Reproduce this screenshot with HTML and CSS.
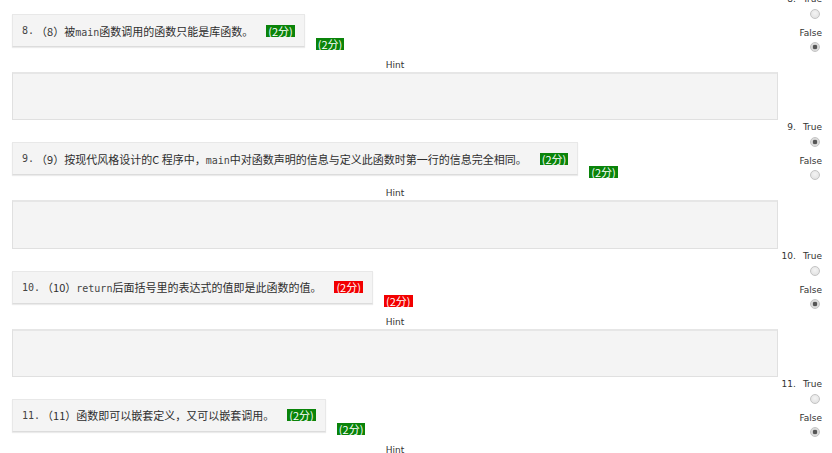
FILE: index.html
```html
<!DOCTYPE html>
<html lang="zh-CN">
<head>
<meta charset="utf-8">
<title>判断题</title>
<link rel="stylesheet" href="styles.css">
</head>
<body>
<div class="list">
  <section class="q">
    <div class="main">
      <div class="row">
        <div class="stem"><span class="num">8.</span><span class="txt">（8）被<code>main</code>函数调用的函数只能是库函数。</span><span class="badge ok">(2分)</span></div>
        <span class="badge ok out">(2分)</span>
      </div>
      <div class="hint-label">Hint</div>
      <div class="hint-box"></div>
    </div>
    <div class="answer">
      <div class="opt"><span class="anum">8.</span>True</div>
      <span class="radio"></span>
      <div class="opt">False</div>
      <span class="radio checked"></span>
    </div>
  </section>

  <section class="q">
    <div class="main">
      <div class="row">
        <div class="stem"><span class="num">9.</span><span class="txt">（9）按现代风格设计的C 程序中，<code>main</code>中对函数声明的信息与定义此函数时第一行的信息完全相同。</span><span class="badge ok">(2分)</span></div>
        <span class="badge ok out">(2分)</span>
      </div>
      <div class="hint-label">Hint</div>
      <div class="hint-box"></div>
    </div>
    <div class="answer">
      <div class="opt"><span class="anum">9.</span>True</div>
      <span class="radio checked"></span>
      <div class="opt">False</div>
      <span class="radio"></span>
    </div>
  </section>

  <section class="q">
    <div class="main">
      <div class="row">
        <div class="stem"><span class="num">10.</span><span class="txt">（10）<code>return</code>后面括号里的表达式的值即是此函数的值。</span><span class="badge bad">(2分)</span></div>
        <span class="badge bad out">(2分)</span>
      </div>
      <div class="hint-label">Hint</div>
      <div class="hint-box"></div>
    </div>
    <div class="answer">
      <div class="opt"><span class="anum">10.</span>True</div>
      <span class="radio"></span>
      <div class="opt">False</div>
      <span class="radio checked"></span>
    </div>
  </section>

  <section class="q">
    <div class="main">
      <div class="row">
        <div class="stem"><span class="num">11.</span><span class="txt">（11）函数即可以嵌套定义，又可以嵌套调用。</span><span class="badge ok">(2分)</span></div>
        <span class="badge ok out">(2分)</span>
      </div>
      <div class="hint-label">Hint</div>
      <div class="hint-box"></div>
    </div>
    <div class="answer">
      <div class="opt"><span class="anum">11.</span>True</div>
      <span class="radio"></span>
      <div class="opt">False</div>
      <span class="radio checked"></span>
    </div>
  </section>
</div>
</body>
</html>
```

FILE: styles.css
```css
html, body {
  margin: 0;
  padding: 0;
  background: #fff;
  overflow: hidden;
}

body {
  font-family: "DejaVu Sans", Verdana, sans-serif;
  color: #333;
}

.list {
  margin-top: -8px;
}

.q {
  display: grid;
  grid-template-columns: 766px 1fr;
  padding-left: 12px;
}

.main {
  display: flex;
  flex-direction: column;
  align-items: flex-start;
  padding-top: 22px;
}

.row {
  display: flex;
  align-items: flex-end;
}

.stem {
  display: flex;
  align-items: center;
  box-sizing: border-box;
  height: 33px;
  padding: 0 9px;
  background: #f4f4f4;
  border: 1px solid #e8e8e8;
  border-bottom: 1px solid #dcdcdc;
  box-shadow: 0 1px 1px rgba(0, 0, 0, 0.08);
  white-space: nowrap;
}

.num {
  font-family: "DejaVu Sans Mono", "Liberation Mono", monospace;
  font-size: 10px;
  color: #444;
  margin-right: 2px;
}

.txt {
  font-family: "Noto Sans CJK SC", sans-serif;
  font-size: 11px;
  color: #2e2e2e;
}

.txt code {
  font-family: "DejaVu Sans Mono", "Liberation Mono", monospace;
  font-size: 10px;
  color: #444;
}

.badge {
  display: inline-block;
  font-family: "Noto Sans CJK SC", sans-serif;
  font-size: 11px;
  line-height: 12px;
  height: 12px;
  padding: 0 2px;
  color: #fff;
  white-space: nowrap;
}

.stem .badge {
  margin-left: 13px;
}

.badge.ok {
  background: #0a840a;
}

.badge.bad {
  background: #f20000;
}

.badge.out {
  margin-left: 11px;
  margin-bottom: -3px;
}

.hint-label {
  align-self: stretch;
  text-align: center;
  font-size: 9px;
  line-height: 14px;
  margin-top: 11px;
  color: #333;
}

.hint-box {
  align-self: stretch;
  box-sizing: border-box;
  height: 48.33px;
  background: #f4f4f4;
  border: 1px solid #e0e0e0;
  border-top: 2px solid #e6e6e6;
}

.answer {
  display: flex;
  flex-direction: column;
  align-items: flex-end;
  padding-right: 10px;
}

.opt {
  font-size: 9px;
  line-height: 14px;
  color: #333;
  white-space: nowrap;
}

.anum {
  margin-right: 7px;
}

.radio {
  display: block;
  box-sizing: border-box;
  width: 10px;
  height: 10px;
  border-radius: 50%;
  border: 1px solid #c4c4c4;
  background: radial-gradient(circle at 50% 40%, #f4f4f4, #dedede);
  margin-right: 2px;
  margin-top: 3px;
  margin-bottom: 7px;
}

.radio + .opt + .radio {
  margin-top: 2px;
  margin-bottom: 0;
}

.radio.checked {
  background: radial-gradient(circle, #555 0 2px, #d6d6d6 2.6px, #e8e8e8 100%);
}
```
